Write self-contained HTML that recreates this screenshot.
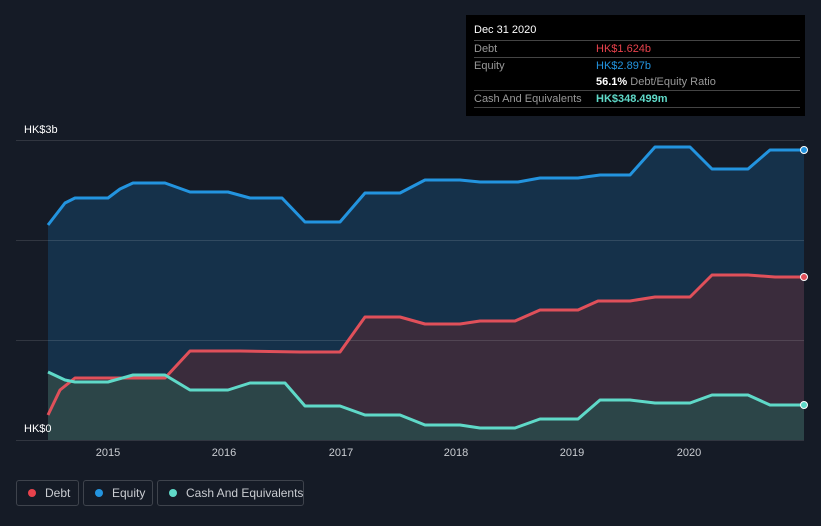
<!DOCTYPE html>
<html><head><style>
body{margin:0;width:821px;height:526px;background:#151b26;font-family:"Liberation Sans",sans-serif;overflow:hidden;position:relative}
.tt{position:absolute;left:466px;top:15px;width:339px;height:101px;background:#000;color:#fff;font-size:11px}
.tt .r{position:absolute;left:8px;width:326px;border-top:1px solid #444;height:17px}
.tt span{position:absolute;top:2px;white-space:nowrap}
.lg{position:absolute;top:480px;height:26px;border:1px solid #3e434c;border-radius:3px;color:#c9ccd1;font-size:12px;line-height:26px;box-sizing:border-box;white-space:nowrap}
.lg i{position:absolute;left:11px;top:8px;width:8px;height:8px;border-radius:50%}
.lg b{font-weight:normal;position:absolute;left:28px;top:-1px}
</style></head><body>
<svg width="821" height="526" style="position:absolute;left:0;top:0">
<polygon fill="#15314a" points="48,225 65,203 75,198 108,198 120,189 133,183 165,183 190,192 228,192 250,198 282,198 305,222 340,222 365,193 400,193 425,180 460,180 480,182 518,182 540,178 578,178 600,175 630,175 655,147 690,147 712,169 748,169 770,150 804,150 804,440 48,440"/>
<polygon fill="#3a2c3c" points="48,415 60,390 75,378 165,378 190,351 240,351 300,352 340,352 365,317 400,317 425,324 460,324 480,321 515,321 540,310 578,310 598,301 630,301 655,297 690,297 712,275 748,275 775,277 804,277 804,440 48,440"/>
<polygon fill="#2c4548" points="48,372 65,380 75,382 108,382 133,375 165,375 190,390 228,390 250,383 285,383 305,406 340,406 365,415 400,415 425,425 460,425 480,428 515,428 540,419 578,419 600,400 630,400 655,403 690,403 712,395 748,395 770,405 804,405 804,440 48,440"/>
<g stroke="#ffffff" stroke-opacity="0.12" stroke-width="1">
<line x1="16" y1="140.5" x2="804" y2="140.5"/><line x1="16" y1="240.5" x2="804" y2="240.5"/><line x1="16" y1="340.5" x2="804" y2="340.5"/><line x1="16" y1="440.5" x2="804" y2="440.5"/>
</g>
<g fill="none" stroke-width="3" stroke-linejoin="round">
<polyline stroke="#2394df" points="48,225 65,203 75,198 108,198 120,189 133,183 165,183 190,192 228,192 250,198 282,198 305,222 340,222 365,193 400,193 425,180 460,180 480,182 518,182 540,178 578,178 600,175 630,175 655,147 690,147 712,169 748,169 770,150 804,150"/>
<polyline stroke="#e0505a" points="48,415 60,390 75,378 165,378 190,351 240,351 300,352 340,352 365,317 400,317 425,324 460,324 480,321 515,321 540,310 578,310 598,301 630,301 655,297 690,297 712,275 748,275 775,277 804,277"/>
<polyline stroke="#5fd9c8" points="48,372 65,380 75,382 108,382 133,375 165,375 190,390 228,390 250,383 285,383 305,406 340,406 365,415 400,415 425,425 460,425 480,428 515,428 540,419 578,419 600,400 630,400 655,403 690,403 712,395 748,395 770,405 804,405"/>
</g>
<circle cx="804" cy="150" r="3.5" fill="#2394df" stroke="#fff" stroke-width="1"/>
<circle cx="804" cy="277" r="3.5" fill="#e0505a" stroke="#fff" stroke-width="1"/>
<circle cx="804" cy="405" r="3.5" fill="#5fd9c8" stroke="#fff" stroke-width="1"/>
<g fill="#fff" font-size="11" font-family="Liberation Sans">
<text x="24" y="133">HK$3b</text><text x="24" y="432">HK$0</text>
</g>
<g fill="#c9ccd1" font-size="11" font-family="Liberation Sans" text-anchor="middle">
<text x="108" y="456">2015</text><text x="224" y="456">2016</text><text x="341" y="456">2017</text><text x="456" y="456">2018</text><text x="572" y="456">2019</text><text x="689" y="456">2020</text>
</g>
</svg>
<div class="tt">
<div style="position:absolute;left:8px;top:9px">Dec 31 2020</div>
<div class="r" style="top:25px"><span style="color:#999">Debt</span><span style="left:122px;color:#e8424c">HK$1.624b</span></div>
<div class="r" style="top:42px"><span style="color:#999">Equity</span><span style="left:122px;color:#2394df">HK$2.897b</span></div>
<div class="r" style="top:59px;border-top:none"><span style="left:122px"><b>56.1%</b> <span style="position:static;color:#999">Debt/Equity Ratio</span></span></div>
<div class="r" style="top:75px"><span style="color:#999">Cash And Equivalents</span><span style="left:122px;color:#5fd9c8;font-weight:bold">HK$348.499m</span></div>
<div class="r" style="top:92px;height:0"></div>
</div>
<div class="lg" style="left:16px;width:63px"><i style="background:#e8424c"></i><b>Debt</b></div>
<div class="lg" style="left:83px;width:70px"><i style="background:#2394df"></i><b>Equity</b></div>
<div class="lg" style="left:157px;width:147px"><i style="background:#5fd9c8"></i><b>Cash And Equivalents</b></div>
</body></html>
